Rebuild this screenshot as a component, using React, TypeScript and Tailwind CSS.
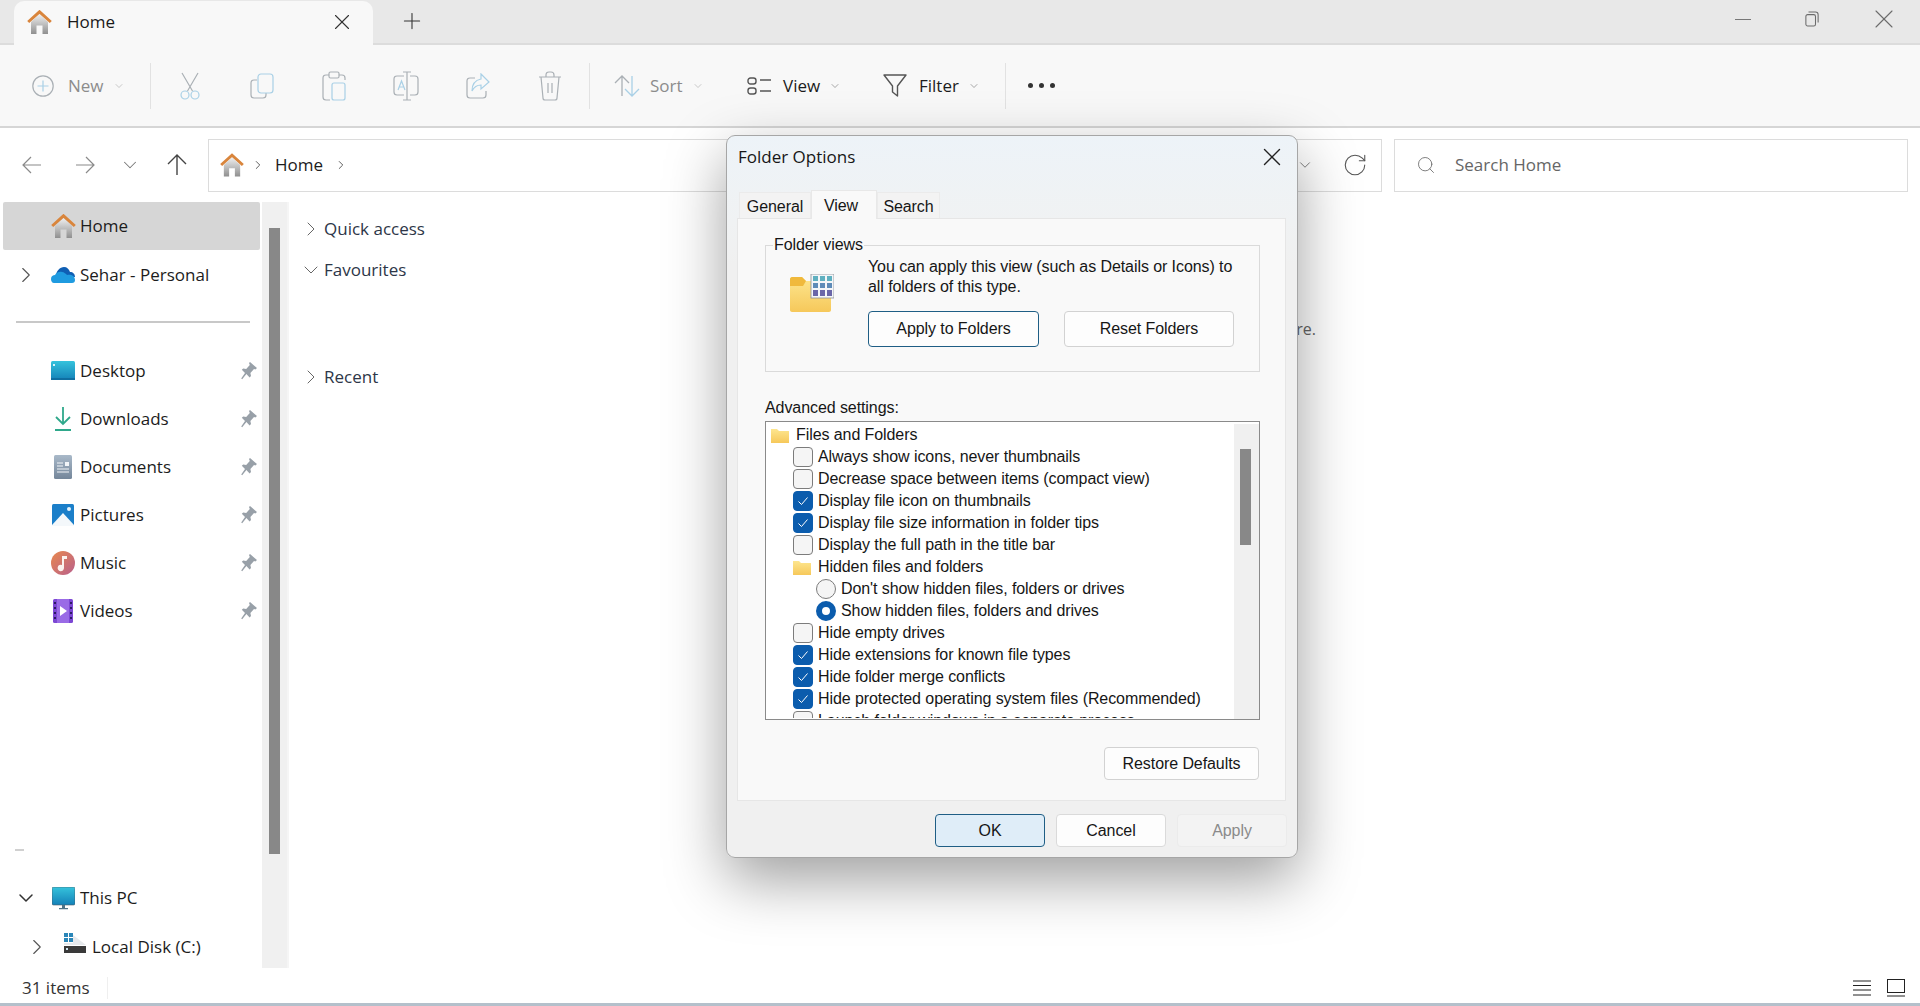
import { ChevronDown, ChevronRight, Plus, RotateCw, Search, X } from "lucide-react";

// shared svg gradients, referenced by id from the icons below
const Defs = () => (
    <svg width="0" height="0" className="absolute">
        <defs>
            <linearGradient id="houseBody" x1="0" y1="0" x2="0" y2="1">
                <stop offset="0" stopColor="#f0f0f0" />
                <stop offset="1" stopColor="#8f8f8f" />
            </linearGradient>
            <linearGradient id="folderFill" x1="0" y1="0" x2="0" y2="1">
                <stop offset="0" stopColor="#fde68f" />
                <stop offset="1" stopColor="#f6c85a" />
            </linearGradient>
            <linearGradient id="screenFill" x1="0" y1="0" x2="0" y2="1">
                <stop offset="0" stopColor="#35c3dc" />
                <stop offset="1" stopColor="#1481b8" />
            </linearGradient>
            <linearGradient id="musicFill" x1="0" y1="0" x2="1" y2="1">
                <stop offset="0" stopColor="#e8884e" />
                <stop offset="1" stopColor="#b9608c" />
            </linearGradient>
            <linearGradient id="docFill" x1="0" y1="0" x2="0" y2="1">
                <stop offset="0" stopColor="#a9b9c9" />
                <stop offset="1" stopColor="#74869a" />
            </linearGradient>
        </defs>
    </svg>
);

const HomeIcon = ({ className }: { className: string }) => (
    <svg viewBox="0 0 25 24" className={className}>
        <path d="M4 12 12.5 4 21 12V24H15.5V15.5H9.5V24H4Z" fill="url(#houseBody)" />
        <path d="M1.2 12 12.5 1.8 23.8 12" fill="none" stroke="#d9853c" strokeWidth="3" />
    </svg>
);

const CloudIcon = () => (
    <svg viewBox="0 0 24 16" className="w-[24px] h-[16px]">
        <path d="M5 9C5 4 9 0 13 0c3 0 5 2 6 5 3 0 5 2 5 5H8Z" fill="#0f5fb4" />
        <path d="M0 12c0-3 2-4 4-4 1-2 4-4 7-3 2 0 4 2 5 3 3-1 8 0 8 5 0 2-1 3-3 3H3c-2 0-3-2-3-4Z" fill="#1f9be0" />
    </svg>
);

const DesktopIcon = () => (
    <svg viewBox="0 0 24 20" className="w-[24px] h-[20px]">
        <rect width="24" height="19" rx="1.5" fill="url(#screenFill)" />
        <rect x="2" y="3" width="2" height="2" fill="#d9f4fa" />
        <rect y="17" width="24" height="2" fill="#0f6ea1" />
    </svg>
);

const DownloadIcon = () => (
    <svg viewBox="0 0 20 26" className="w-[20px] h-[26px]" fill="none" stroke="#2fa88b" strokeWidth="1.8">
        <path d="M10 1V18M3 11l7 7 7-7" />
        <path d="M2 24H18" strokeWidth="2" />
    </svg>
);

const DocIcon = () => (
    <svg viewBox="0 0 18 24" className="w-[18px] h-[24px]">
        <rect width="18" height="24" rx="1.5" fill="url(#docFill)" />
        <path d="M3 8H9M3 11H9M3 14H15M3 17H15" stroke="#f2f5f8" strokeWidth="1" />
        <rect x="11" y="7" width="4" height="4" fill="#f2f5f8" />
    </svg>
);

const PictureIcon = () => (
    <svg viewBox="0 0 22 22" className="w-[22px] h-[22px]">
        <rect width="22" height="22" rx="1.5" fill="#1b7fc9" />
        <circle cx="17" cy="5" r="2" fill="#e6f4fc" />
        <path d="M0 21 11 9l11 12v1H0Z" fill="#f4f8fb" />
    </svg>
);

const MusicIcon = () => (
    <svg viewBox="0 0 24 24" className="w-[24px] h-[24px]">
        <circle cx="12" cy="12" r="12" fill="url(#musicFill)" />
        <path d="M11 5h5v3h-3v9a3.2 3.2 0 1 1-2-3Z" fill="#fbf2ee" />
    </svg>
);

const VideoIcon = () => (
    <svg viewBox="0 0 20 24" className="w-[20px] h-[24px]">
        <rect width="20" height="24" rx="1.5" fill="#7c47d3" />
        <rect x="4" y="0" width="12" height="24" fill="#9a6be6" />
        <path d="M1 3h2v2H1ZM1 8h2v2H1ZM1 13h2v2H1ZM1 18h2v2H1ZM17 3h2v2h-2ZM17 8h2v2h-2ZM17 13h2v2h-2ZM17 18h2v2h-2Z" fill="#2e1a66" />
        <path d="M7 7 14 12 7 17Z" fill="#fff" />
    </svg>
);

const MonitorIcon = () => (
    <svg viewBox="0 0 23 23" className="w-[23px] h-[23px]">
        <rect width="23" height="18" rx="1.5" fill="url(#screenFill)" stroke="#4b5b66" strokeWidth="0.6" />
        <path d="M10 18h3v3h-3ZM7 21h9v1.2H7Z" fill="#4f7286" />
    </svg>
);

const DiskIcon = () => (
    <svg viewBox="0 0 22 22" className="w-[22px] h-[22px]">
        <path d="M0 1h4v4H0ZM5 1h4v4H5ZM0 6h4v4H0ZM5 6h4v4H5Z" fill="#2a86b8" />
        <path d="M9 3 22 13H0V11H9Z" fill="#e6e9ec" />
        <rect y="14" width="22" height="7" fill="#3a3a3a" />
        <rect x="2" y="16" width="2" height="2" fill="#cfe6f2" />
    </svg>
);

const PinIcon = () => (
    <svg viewBox="0 0 16 18" className="w-[16px] h-[18px]" fill="#98a0a8">
        <path d="M9 0 16 6 14.4 7.4 13 7 9.4 11 10 14 8.6 15.4 5.4 12 1.2 17.2 0.2 16.6 4 11 .8 7.8 2.2 6.6 5.2 7 8.8 3 8 1Z" />
    </svg>
);

const FolderSmall = () => (
    <svg viewBox="0 0 18 15" className="w-[18px] h-[15px]">
        <path d="M0 1h6l2 2h10v12H0Z" fill="url(#folderFill)" />
    </svg>
);

const FolderViewIcon = () => (
    <svg viewBox="0 0 44 38" className="w-[44px] h-[38px]">
        <path d="M0 5C0 4 1 3 2 3H12L16 7H41V36C41 37 40 38 39 38H2C1 38 0 37 0 36Z" fill="url(#folderFill)" />
        <path d="M0 5C0 4 1 3 2 3H12L16 7 13 12H0Z" fill="#f0b93c" />
        <rect x="21" y="0" width="23" height="24" fill="#f4f6f8" stroke="#8a8f96" strokeWidth="0.8" />
        <path d="M23 2h5v5h-5ZM30 2h5v5h-5ZM37 2h5v5h-5Z" fill="#5fb0c0" />
        <path d="M23 9h5v5h-5ZM30 9h5v5h-5ZM37 9h5v5h-5Z" fill="#5e8bb8" />
        <path d="M23 16h5v6h-5ZM30 16h5v6h-5ZM37 16h5v6h-5Z" fill="#6a66a8" />
    </svg>
);

// toolbar icons, grey stroke with a pale blue accent because they are disabled
const grey = "#aab0b5";
const blue = "#a9d0e6";

const NewIcon = () => (
    <svg viewBox="0 0 22 22" className="w-[22px] h-[22px]" fill="none" strokeWidth="1.2">
        <circle cx="11" cy="11" r="10.2" stroke={grey} />
        <path d="M11 5.5V16.5M5.5 11H16.5" stroke={blue} />
    </svg>
);
const CutIcon = () => (
    <svg viewBox="0 0 24 28" className="w-[24px] h-[28px]" fill="none" strokeWidth="1.2">
        <path d="M4 1 14.5 19M20 1 9.5 19" stroke={grey} />
        <circle cx="7" cy="23" r="4" stroke={blue} />
        <circle cx="17" cy="23" r="4" stroke={blue} />
    </svg>
);
const CopyIcon = () => (
    <svg viewBox="0 0 24 26" className="w-[24px] h-[26px]" fill="none" strokeWidth="1.2">
        <path d="M7 7H4C2 7 1 8 1 10V22C1 24 2 25 4 25H13C15 25 16 24 16 22V20" stroke={grey} />
        <rect x="8" y="1" width="15" height="19" rx="3" stroke={blue} />
    </svg>
);
const PasteIcon = () => (
    <svg viewBox="0 0 24 30" className="w-[24px] h-[30px]" fill="none" strokeWidth="1.2">
        <path d="M7 4H4C2 4 1 5 1 7V26C1 28 2 29 4 29H8M17 4H20C22 4 23 5 23 7V9" stroke={grey} />
        <rect x="7" y="1" width="10" height="6" rx="1.5" stroke={grey} />
        <rect x="10" y="12" width="13" height="17" rx="2" stroke={blue} />
    </svg>
);
const RenameIcon = () => (
    <svg viewBox="0 0 26 30" className="w-[26px] h-[30px]" fill="none" strokeWidth="1.2">
        <path d="M11 5H4C2 5 1 6 1 8V21C1 23 2 24 4 24H11M17 5H22C24 5 25 6 25 8V21C25 23 24 24 22 24H17" stroke={grey} />
        <path d="M10 1H18M14 1V29M10 29H18" stroke={grey} />
        <path d="M5 19 8.5 10 12 19M6.2 16H10.8" stroke={blue} />
    </svg>
);
const ShareIcon = () => (
    <svg viewBox="0 0 24 26" className="w-[24px] h-[26px]" fill="none" strokeWidth="1.2">
        <path d="M9 5H4C2 5 1 6 1 8V22C1 24 2 25 4 25H17C19 25 20 24 20 22V18" stroke={grey} />
        <path d="M15 1 23 9 15 16V12C11 12 8 14 6 18 6 11 10 7 15 6Z" stroke={blue} />
    </svg>
);
const TrashIcon = () => (
    <svg viewBox="0 0 24 30" className="w-[24px] h-[30px]" fill="none" stroke={grey} strokeWidth="1.2">
        <path d="M1 6H23M8 6V4C8 2 9 1 11 1H13C15 1 16 2 16 4V6M3 6 5 27C5 28 6 29 7 29H17C18 29 19 28 19 27L21 6" />
        <path d="M10 12V22M14 12V22" />
    </svg>
);
const SortIcon = () => (
    <svg viewBox="0 0 26 24" className="w-[26px] h-[24px]" fill="none" strokeWidth="1.3">
        <path d="M8 22V2M1 9 8 2 15 9" stroke={grey} />
        <path d="M18 2V22M11 15 18 22 25 15" stroke={blue} />
    </svg>
);
const ViewIcon = () => (
    <svg viewBox="0 0 24 18" className="w-[24px] h-[18px]" fill="none" stroke="#555" strokeWidth="1.4">
        <rect x="1" y="1" width="8" height="6" rx="2.5" />
        <rect x="1" y="11" width="8" height="6" rx="2.5" />
        <path d="M13 3H24M13 14H24" />
    </svg>
);
const FilterIcon = () => (
    <svg viewBox="0 0 24 24" className="w-[24px] h-[24px]" fill="none" stroke="#555" strokeWidth="1.4">
        <path d="M1 1H23L14.5 12V22L9.5 18V12Z" strokeLinejoin="round" />
    </svg>
);

const RestoreIcon = () => (
    <svg viewBox="0 0 16 18" className="w-[14px] h-[16px]" fill="none" stroke="#6b6b6b" strokeWidth="1.2">
        <rect x="1" y="4" width="11" height="13" rx="2" />
        <path d="M4 1H12C14 1 15 2 15 4V13" />
    </svg>
);

const Check = () => (
    <svg viewBox="0 0 20 20" className="w-[20px] h-[20px]" fill="none" stroke="#fff" strokeWidth="1">
        <path d="M5.5 10.5 8.5 13.5 14.5 6.5" />
    </svg>
);

const navItems = [
    { label: "Desktop", icon: <DesktopIcon /> },
    { label: "Downloads", icon: <DownloadIcon /> },
    { label: "Documents", icon: <DocIcon /> },
    { label: "Pictures", icon: <PictureIcon /> },
    { label: "Music", icon: <MusicIcon /> },
    { label: "Videos", icon: <VideoIcon /> },
];

type Row = { label: string; kind: "folder" | "check" | "radio"; on?: boolean; level: 0 | 1 | 2 };

const rows: Row[] = [
    { label: "Files and Folders", kind: "folder", level: 0 },
    { label: "Always show icons, never thumbnails", kind: "check", level: 1 },
    { label: "Decrease space between items (compact view)", kind: "check", level: 1 },
    { label: "Display file icon on thumbnails", kind: "check", on: true, level: 1 },
    { label: "Display file size information in folder tips", kind: "check", on: true, level: 1 },
    { label: "Display the full path in the title bar", kind: "check", level: 1 },
    { label: "Hidden files and folders", kind: "folder", level: 1 },
    { label: "Don't show hidden files, folders or drives", kind: "radio", level: 2 },
    { label: "Show hidden files, folders and drives", kind: "radio", on: true, level: 2 },
    { label: "Hide empty drives", kind: "check", level: 1 },
    { label: "Hide extensions for known file types", kind: "check", on: true, level: 1 },
    { label: "Hide folder merge conflicts", kind: "check", on: true, level: 1 },
    { label: "Hide protected operating system files (Recommended)", kind: "check", on: true, level: 1 },
    { label: "Launch folder windows in a separate process", kind: "check", level: 1 },
];

const AdvancedRow = ({ row }: { row: Row }) => (
    <div className={`h-[22px] flex items-center shrink-0 ${row.level === 0 ? "pl-[5px]" : row.level === 1 ? "pl-[27px]" : "pl-[50px]"}`}>
        {row.kind === "folder" && (
            <div className="w-[20px] flex justify-start mr-[5px]"><FolderSmall /></div>
        )}
        {row.kind === "check" && (
            <div className={`w-[20px] h-[20px] mr-[5px] rounded-[4px] border ${row.on ? "bg-[#0b5cad] border-[#0b5cad]" : "bg-[#f5f5f5] border-[#7c7c7c]"}`}>
                {row.on && <div className="-m-px"><Check /></div>}
            </div>
        )}
        {row.kind === "radio" && (
            <div className={`w-[20px] h-[20px] mr-[5px] rounded-full ${row.on ? "bg-white border-[6px] border-[#0b5cad]" : "bg-[#f5f5f5] border border-[#7c7c7c]"}`}></div>
        )}
        <span className="whitespace-nowrap">{row.label}</span>
    </div>
);

const DialogButton = ({ label, className }: { label: string; className: string }) => (
    <button type="button" className={`rounded-[4px] border flex items-center justify-center ${className}`}>{label}</button>
);

const App = () => {
    return (
        <div className="relative w-[1920px] h-[1006px] overflow-hidden bg-white flex flex-col font-['Open_Sans',sans-serif] text-[17px] text-[#1c1c1c]">
            <Defs />

            {/* tab strip */}
            <div className="h-[45px] shrink-0 bg-[#e8e8e8] border-b-2 border-[#dcdcdc] flex items-end pl-[14px]">
                <div className="w-[359px] h-[44px] -mb-[2px] bg-[#f8f8f8] rounded-t-[10px] flex items-center pl-[13px] pb-[2px]">
                    <HomeIcon className="w-[25px] h-[24px]" />
                    <span className="ml-[15px] w-[262px] text-[#1a1a1a]">Home</span>
                    <X size={26} strokeWidth={1} className="text-[#333]" />
                </div>
                <Plus size={26} strokeWidth={1} className="ml-[26px] mb-[9px] text-[#333]" />
                <div className="ml-auto flex items-center mb-[8px] text-[#6b6b6b]">
                    <div className="w-[16px] h-px bg-[#777] mr-[54px]"></div>
                    <RestoreIcon />
                    <X size={32} strokeWidth={0.8} className="ml-[49px] mr-[20px]" />
                </div>
            </div>

            {/* command bar */}
            <div className="h-[83px] shrink-0 bg-[#f8f8f8] border-b-2 border-[#d6d6d6] flex items-center">
                <div className="ml-[32px] flex items-center w-[118px] text-[#8c8c8c]">
                    <NewIcon />
                    <span className="ml-[14px] w-[36px]">New</span>
                    <ChevronDown size={12} className="ml-[9px] text-[#999]" strokeWidth={1} />
                </div>
                <div className="w-px h-[46px] bg-[#e2e2e2]"></div>
                <div className="ml-[3px] flex items-center">
                    {[<CutIcon key="cut" />, <CopyIcon key="copy" />, <PasteIcon key="paste" />, <RenameIcon key="rename" />, <ShareIcon key="share" />, <TrashIcon key="trash" />].map((icon, i) => (
                        <div key={i} className="w-[72px] flex justify-center">{icon}</div>
                    ))}
                </div>
                <div className="ml-[3px] w-px h-[46px] bg-[#e2e2e2]"></div>
                <div className="ml-[24px]"><SortIcon /></div>
                <span className="ml-[10px] w-[36px] text-[#8c8c8c]">Sort</span>
                <ChevronDown size={12} className="ml-[6px] text-[#999]" strokeWidth={1} />
                <div className="ml-[43px]"><ViewIcon /></div>
                <span className="ml-[12px] w-[40px] text-[#1c1c1c]">View</span>
                <ChevronDown size={12} className="ml-[6px] text-[#555]" strokeWidth={1} />
                <div className="ml-[42px]"><FilterIcon /></div>
                <span className="ml-[12px] w-[42px] text-[#1c1c1c]">Filter</span>
                <ChevronDown size={12} className="ml-[7px] text-[#555]" strokeWidth={1} />
                <div className="ml-[25px] w-px h-[46px] bg-[#e2e2e2]"></div>
                <div className="ml-[22px] flex gap-[6px]">
                    <div className="w-[5px] h-[5px] rounded-full bg-[#333]"></div>
                    <div className="w-[5px] h-[5px] rounded-full bg-[#333]"></div>
                    <div className="w-[5px] h-[5px] rounded-full bg-[#333]"></div>
                </div>
            </div>

            {/* address row */}
            <div className="h-[74px] shrink-0 flex items-center pl-[22px] text-[#1c1c1c]">
                <svg viewBox="0 0 20 18" className="w-[20px] h-[18px]" fill="none" stroke="#8a8a8a" strokeWidth="1.2"><path d="M19 9H1M9 1 1 9 9 17" /></svg>
                <svg viewBox="0 0 20 18" className="ml-[33px] w-[20px] h-[18px]" fill="none" stroke="#8a8a8a" strokeWidth="1.2"><path d="M1 9H19M11 1 19 9 11 17" /></svg>
                <ChevronDown size={22} strokeWidth={1.1} className="ml-[24px] text-[#777]" />
                <svg viewBox="0 0 20 22" className="ml-[26px] w-[20px] h-[22px]" fill="none" stroke="#444" strokeWidth="1.4"><path d="M10 21V1M1 10 10 1 19 10" /></svg>
                <div className="ml-[21px] w-[1174px] h-[53px] border border-[#dcdcdc] flex items-center pl-[11px]">
                    <HomeIcon className="w-[24px] h-[24px]" />
                    <ChevronRight size={14} strokeWidth={1.6} className="ml-[7px] text-[#555]" />
                    <span className="ml-[10px] w-[50px]">Home</span>
                    <ChevronRight size={14} strokeWidth={1.6} className="ml-[9px] text-[#555]" />
                    <ChevronDown size={18} strokeWidth={1} className="ml-auto mr-[28px] text-[#555]" />
                    <RotateCw size={26} strokeWidth={1} className="mr-[13px] text-[#555]" />
                </div>
                <div className="ml-[12px] w-[514px] h-[53px] border border-[#dcdcdc] flex items-center pl-[21px] text-[#666]">
                    <Search size={20} strokeWidth={1} />
                    <span className="ml-[19px]">Search Home</span>
                </div>
            </div>

            {/* navigation pane + content */}
            <div className="h-[766px] shrink-0 flex">
                <div className="w-[262px] shrink-0 overflow-hidden">
                    <div className="ml-[3px] w-[257px] h-[48px] bg-[#d6d6d6] rounded-[2px] flex items-center pl-[48px]">
                        <HomeIcon className="w-[25px] h-[24px]" />
                        <span className="ml-[4px]">Home</span>
                    </div>
                    <div className="mt-[1px] h-[48px] flex items-center">
                        <ChevronRight size={26} strokeWidth={1} className="ml-[13px] text-[#555]" />
                        <div className="ml-[12px]"><CloudIcon /></div>
                        <span className="ml-[5px]">Sehar - Personal</span>
                    </div>
                    <div className="mt-[22px] ml-[16px] w-[234px] h-[2px] bg-[#c8c8c8]"></div>
                    <div className="mt-[24px]">
                        {navItems.map((item) => (
                            <div key={item.label} className="h-[48px] flex items-center">
                                <div className="ml-[50px] w-[26px] flex justify-center">{item.icon}</div>
                                <span className="ml-[4px] flex-1">{item.label}</span>
                                <div className="mr-[5px]"><PinIcon /></div>
                            </div>
                        ))}
                    </div>
                    <div className="mt-[214px] ml-[15px] w-[9px] h-[2px] bg-[#d0d0d0]"></div>
                    <div className="mt-[23px] h-[48px] flex items-center">
                        <ChevronDown size={24} strokeWidth={1.5} className="ml-[14px] text-[#333]" />
                        <div className="ml-[14px]"><MonitorIcon /></div>
                        <span className="ml-[5px]">This PC</span>
                    </div>
                    <div className="mt-[1px] h-[48px] flex items-center">
                        <ChevronRight size={26} strokeWidth={1} className="ml-[24px] text-[#555]" />
                        <div className="ml-[14px] -mt-[8px]"><DiskIcon /></div>
                        <span className="ml-[6px]">Local Disk (C:)</span>
                    </div>
                </div>

                <div className="w-[25px] shrink-0 bg-[#f0f0f0] pl-[7px] pt-[26px]">
                    <div className="w-[11px] h-[626px] bg-[#888]"></div>
                </div>

                <div className="flex-1 border-l-2 border-[#f5f5f5] pt-[12px] pl-[10px] text-[#2d3648]">
                    <div className="h-[30px] flex items-center">
                        <ChevronRight size={24} strokeWidth={1} className="text-[#666]" />
                        <span className="ml-px">Quick access</span>
                    </div>
                    <div className="mt-[11px] h-[30px] flex items-center">
                        <ChevronDown size={24} strokeWidth={1} className="text-[#666]" />
                        <span className="ml-px">Favourites</span>
                    </div>
                    <div className="mt-[29px] h-[30px] flex items-center justify-end pr-[604px] text-[16px] text-[#666]">re.</div>
                    <div className="mt-[18px] h-[30px] flex items-center">
                        <ChevronRight size={24} strokeWidth={1} className="text-[#666]" />
                        <span className="ml-px">Recent</span>
                    </div>
                </div>
            </div>

            {/* status bar */}
            <div className="flex-1 border-b-[3px] border-[#b4c0cb] flex items-center pl-[22px] pt-[4px] text-[#333]">
                <span className="w-[85px] whitespace-nowrap">31 items</span>
                <div className="w-px h-[22px] bg-[#efefef]"></div>
                <div className="ml-auto flex items-center mr-[15px] gap-[16px]">
                    <svg viewBox="0 0 18 16" className="w-[18px] h-[16px]" fill="none" stroke="#222" strokeWidth="1"><path d="M0 1H18M0 5.5H18M0 10H18M0 15H18" /></svg>
                    <svg viewBox="0 0 18 18" className="w-[18px] h-[18px]" fill="none" stroke="#222" strokeWidth="1"><rect x=".5" y=".5" width="17" height="13" /><path d="M0 17H18" /></svg>
                </div>
            </div>

            {/* Folder Options dialog */}
            <div className="absolute left-[726px] top-[135px] w-[572px] h-[723px] rounded-[9px] border border-[#a6a6a6] bg-[linear-gradient(#edf3f8,#f0f2f3_12%,#f0f0f0_18%)] shadow-[0_22px_60px_rgba(0,0,0,0.38)] font-['Liberation_Sans',Arial,sans-serif] text-[16px] tracking-[-0.08px] text-[#161616]">
                <div className="h-[42px] flex items-center pl-[11px] pr-[10px] font-['Open_Sans',sans-serif] text-[17px] tracking-normal">
                    <span>Folder Options</span>
                    <X size={30} strokeWidth={1.1} className="ml-auto text-[#222]" />
                </div>

                <div className="h-[40px] ml-[12px] flex items-end">
                    <div className="w-[72px] h-[26px] bg-[#f3f3f3] border border-b-0 border-[#ebebeb] flex items-center justify-center pt-[3px]">General</div>
                    <div className="w-[66px] h-[29px] -mb-px relative bg-[#f9f9f9] border border-b-0 border-[#e8e8e8] flex items-start justify-center pt-[3px] pr-[6px]">View</div>
                    <div className="w-[63px] h-[26px] bg-[#f3f3f3] border border-b-0 border-[#ebebeb] flex items-center justify-center pt-[3px]">Search</div>
                </div>

                <div className="ml-[10px] w-[549px] h-[583px] bg-[#f9f9f9] border border-[#e6e6e6] pl-[27px]">
                    <div className="relative mt-[26px] w-[495px] h-[127px] border border-[#dadada] flex">
                        <span className="absolute left-[7px] -top-[11px] bg-[#f9f9f9] px-px leading-[20px]">Folder views</span>
                        <div className="ml-[24px] mt-[28px]"><FolderViewIcon /></div>
                        <div className="ml-[34px] pt-[11px]">
                            <p className="leading-[20px] w-[380px]">You can apply this view (such as Details or Icons) to all folders of this type.</p>
                            <div className="mt-[14px] flex gap-[25px]">
                                <DialogButton label="Apply to Folders" className="w-[171px] h-[36px] bg-[#fdfdfd] border-[#1f5e85]" />
                                <DialogButton label="Reset Folders" className="w-[170px] h-[36px] bg-[#fdfdfd] border-[#d2d2d2]" />
                            </div>
                        </div>
                    </div>

                    <div className="mt-[26px] leading-[20px]">Advanced settings:</div>
                    <div className="mt-[3px] w-[495px] h-[299px] border border-[#8a8a8a] bg-white flex overflow-hidden">
                        <div className="flex-1 flex flex-col pt-[2px] overflow-hidden h-[296px]">
                            {rows.map((row) => (
                                <AdvancedRow key={row.label} row={row} />
                            ))}
                        </div>
                        <div className="w-[25px] bg-[#f0f0f0] mt-[2px] pl-[6px] pt-[25px]">
                            <div className="w-[11px] h-[96px] bg-[#888]"></div>
                        </div>
                    </div>

                    <div className="mt-[27px] w-[495px] flex justify-end pr-px">
                        <DialogButton label="Restore Defaults" className="w-[155px] h-[33px] bg-[#fdfdfd] border-[#d2d2d2]" />
                    </div>
                </div>

                <div className="mt-[13px] flex justify-end gap-[11px] pr-[10px]">
                    <DialogButton label="OK" className="w-[110px] h-[33px] bg-[#dfedf8] border-[#1f5e85]" />
                    <DialogButton label="Cancel" className="w-[110px] h-[33px] bg-[#fdfdfd] border-[#dadada]" />
                    <DialogButton label="Apply" className="w-[110px] h-[33px] bg-[#f3f3f3] border-[#ebebeb] text-[#8a8a8a]" />
                </div>
            </div>
        </div>
    );
};

export default App;
